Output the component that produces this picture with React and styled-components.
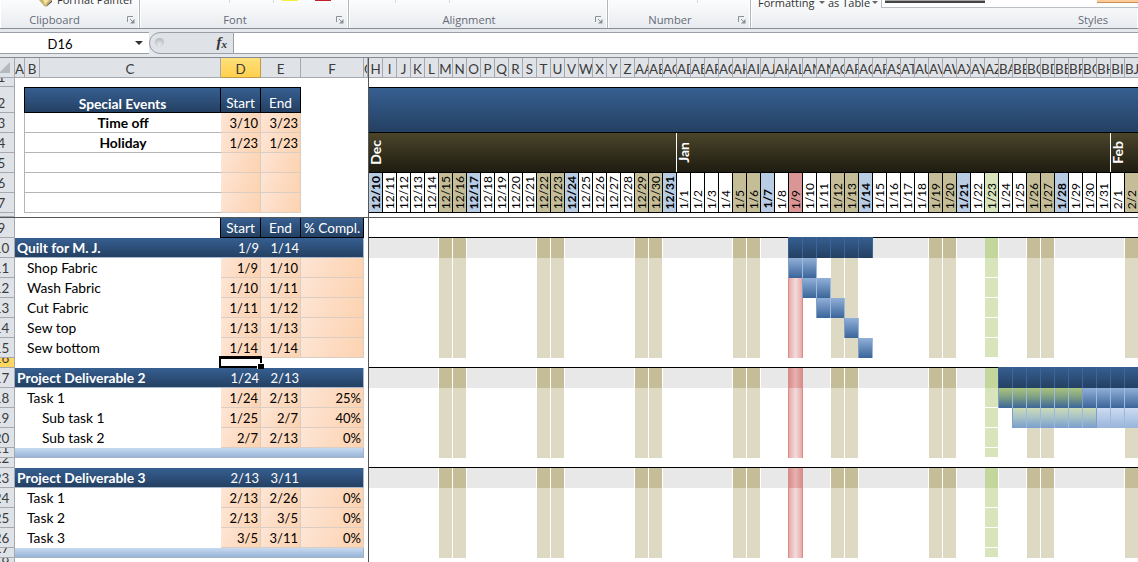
import React from "react";
import styled, { createGlobalStyle } from "styled-components";

const COLUMN_COUNT = 55;
const TODAY = 30;
const HOLIDAY = 44;

const letter = (i) => String.fromCharCode(65 + i);
const columnName = (i) => {
  const n = i + 7;
  return n < 26 ? letter(n) : letter(Math.floor(n / 26) - 1) + letter(n % 26);
};

const days = Array.from({ length: COLUMN_COUNT }, (_, i) => {
  const label =
    i < 22 ? `12/${i + 10}` : i < 53 ? `1/${i - 21}` : `2/${i - 52}`;
  let kind = "plain";
  if (i % 7 === 0) kind = "monday";
  if (i % 7 === 4) kind = "friday";
  if (i % 7 > 4) kind = "weekend";
  if (i === TODAY) kind = "today";
  if (i === HOLIDAY) kind = "holiday";
  return { label, kind, column: columnName(i) };
});

const events = [
  { no: 3, name: "Time off", start: "3/10", end: "3/23" },
  { no: 4, name: "Holiday", start: "1/23", end: "1/23" },
  { no: 5 },
  { no: 6 },
  { no: 7 },
];

const rows = [
  { no: 10, type: "group", name: "Quilt for M. J.", start: "1/9", end: "1/14", bars: [[30, 35, "summary"]] },
  { no: 11, type: "task", name: "Shop Fabric", start: "1/9", end: "1/10", bars: [[30, 31, "task"]] },
  { no: 12, type: "task", name: "Wash Fabric", start: "1/10", end: "1/11", bars: [[31, 32, "task"]] },
  { no: 13, type: "task", name: "Cut Fabric", start: "1/11", end: "1/12", bars: [[32, 33, "task"]] },
  { no: 14, type: "task", name: "Sew top", start: "1/13", end: "1/13", bars: [[34, 34, "task"]] },
  { no: 15, type: "task", name: "Sew bottom", start: "1/14", end: "1/14", bars: [[35, 35, "task"]] },
  { no: 16, type: "gap", active: true },
  { no: 17, type: "group", name: "Project Deliverable 2", start: "1/24", end: "2/13", bars: [[45, 54, "summary"]] },
  { no: 18, type: "task", name: "Task 1", start: "1/24", end: "2/13", done: "25%", bars: [[45, 50, "taskDone"], [51, 54, "task"]] },
  { no: 19, type: "task", sub: true, name: "Sub task 1", start: "1/25", end: "2/7", done: "40%", bars: [[46, 51, "subDone"], [52, 54, "sub"]] },
  { no: 20, type: "task", sub: true, name: "Sub task 2", start: "2/7", end: "2/13", done: "0%" },
  { no: 21, type: "footer" },
  { no: 22, type: "gap" },
  { no: 23, type: "group", name: "Project Deliverable 3", start: "2/13", end: "3/11" },
  { no: 24, type: "task", name: "Task 1", start: "2/13", end: "2/26", done: "0%" },
  { no: 25, type: "task", name: "Task 2", start: "2/13", end: "3/5", done: "0%" },
  { no: 26, type: "task", name: "Task 3", start: "3/5", end: "3/11", done: "0%" },
  { no: 27, type: "footer" },
  { no: 28, type: "gap" },
];

const rowHeight = (type) => (type === "gap" || type === "footer" ? 10 : 20);

const navy = "linear-gradient(#365f91, #244062)";

const barFill = {
  summary: navy,
  task: "linear-gradient(#91b0d8, #3b6599)",
  taskDone: "linear-gradient(#a9c47e, #7f9f84 45%, #3b6599)",
  sub: "linear-gradient(#cddcf2, #98b5da)",
  subDone: "linear-gradient(#cbdcb8, #a9c3c5 45%, #7a9fcd)",
};

const dayFill = {
  plain: "#fff",
  friday: "#fff",
  monday: "#b8cce4",
  weekend: "#c4bd97",
  today: "#d99694",
  holiday: "#d7e4bc",
};

const cellFill = ({ $kind, $group }) => {
  if ($kind === "weekend") return $group ? "#c4bd97" : "#ddd9c3";
  if ($kind === "holiday") return $group ? "#c3d69b" : "#d7e4bc";
  if ($kind === "today")
    return $group
      ? "linear-gradient(90deg, #d98c8a, #e6b2b0 50%, #d98c8a)"
      : "linear-gradient(90deg, #e6aaa9, #f2dcdb 50%, #e6aaa9)";
  return $group ? "#e8e8e8" : "#fff";
};

const GlobalStyle = createGlobalStyle`
  * {
    box-sizing: border-box;
  }
  body {
    margin: 0;
    overflow: hidden;
    background: #fff;
  }
`;

const Screen = styled.div`
  width: 1138px;
  height: 562px;
  overflow: hidden;
  font-family: Lato, sans-serif;
  font-size: 13px;
  line-height: 18px;
  color: #000;
  white-space: nowrap;
`;

const Ribbon = styled.div`
  display: flex;
  height: 29px;
  background: linear-gradient(#fbfcfd, #f2f4f6 50%, #e8ebef);
  border-bottom: 1px solid #8b9097;
  font-family: "Open Sans", sans-serif;
  font-size: 11.2px;
  color: #666a78;
`;

const RibbonGroup = styled.div`
  display: flex;
  flex-direction: column;
  flex: none;
  width: ${(p) => p.$width}px;
  border-right: 1px solid #b2b5ba;
  box-shadow: inset -1px 0 #fff, inset 1px 0 #fff;
`;

const Tools = styled.div`
  display: flex;
  height: 11px;
  padding-left: ${(p) => p.$indent || 0}px;
  overflow: hidden;
  color: #333;
`;

const ToolText = styled.span`
  width: ${(p) => p.$width}px;
  margin-top: ${(p) => p.$top}px;
  margin-left: ${(p) => p.$gap || 0}px;
  font-size: 11px;
  line-height: 16px;
`;

const ToolArrow = styled.i`
  width: 0;
  height: 0;
  margin: 1px 3px 0 2px;
  border: 3px solid transparent;
  border-top: 3px solid #666;
  border-bottom: 0;
`;

const Swatch = styled.i`
  width: 16px;
  height: 1px;
  margin-right: ${(p) => p.$gap || 0}px;
  background: ${(p) => p.$color};
`;

const Tick = styled.i`
  width: 1px;
  height: 3px;
  margin-right: ${(p) => p.$gap}px;
  background: #d5d8dc;
`;

const Gallery = styled.div`
  flex: 1;
  display: flex;
  justify-content: space-between;
  height: 8px;
  padding-left: 3px;
  background: #fff;
  border: solid #b9bec5;
  border-width: 0 0 1px 1px;
`;

const GalleryItem = styled.i`
  width: ${(p) => p.$width}px;
  height: 3px;
  background: ${(p) => p.$color};
  border-bottom: ${(p) => (p.$selected ? "2px solid #444" : "1px solid #c98d5a")};
`;

const GroupLabel = styled.div`
  display: flex;
  align-items: center;
  height: 17px;
  padding: 0 4px 0 ${(p) => p.$indent || 0}px;
  span {
    flex: 1;
    text-align: center;
    padding-right: ${(p) => p.$trim ?? 6}px;
  }
`;

const FormulaBar = styled.div`
  display: flex;
  height: 29px;
  padding: 3px 0;
  background: #e4e7eb;
  border-bottom: 1px solid #858b94;
`;

const NameBox = styled.div`
  display: flex;
  align-items: center;
  width: 149px;
  height: 22px;
  background: #fff;
  border: solid #9a9fa7;
  border-width: 1px 0;
  padding: 0 6px 0 0;
  span {
    width: 120px;
    padding-top: 1px;
    text-align: center;
  }
`;

const NameArrow = styled.i`
  margin-left: auto;
  border: 4px solid transparent;
  border-top-color: #333;
  border-bottom: 0;
`;

const FunctionBox = styled.div`
  display: flex;
  align-items: center;
  justify-content: space-between;
  width: 85px;
  height: 22px;
  padding: 0 6px 0 5px;
  background: #dfe3e8;
  border: 1px solid #9a9fa7;
  border-radius: 11px 0 0 11px;
`;

const Knob = styled.i`
  width: 9px;
  height: 9px;
  margin-top: -2px;
  border-radius: 50%;
  background: radial-gradient(circle at 50% 75%, #e8eaed, #a9adb3);
`;

const Fx = styled.span`
  font: italic bold 15px/18px "Liberation Serif", serif;
  color: #333;
  sub {
    font-size: 11px;
    vertical-align: -1px;
  }
`;

const FormulaInput = styled.div`
  flex: 1;
  height: 22px;
  background: #fff;
  border: solid #9a9fa7;
  border-width: 1px 0;
`;

const SheetRow = styled.div`
  display: flex;
  height: ${(p) => p.$height}px;
`;

const RowNumber = styled.div`
  display: flex;
  flex: none;
  align-items: flex-end;
  justify-content: center;
  width: 26px;
  margin-left: -11px;
  overflow: hidden;
  color: #3b3b3b;
  font-size: 13.4px;
  line-height: 17px;
  background: ${(p) => (p.$active ? "#ffd65f" : "#dfe3e8")};
  border: solid #a5a9af;
  border-width: 0 1px 1px 0;
`;

const ColumnHead = styled.div`
  flex: none;
  display: flex;
  justify-content: ${(p) => (p.$day ? "safe center" : "center")};
  width: ${(p) => p.$width}px;
  height: 20px;
  overflow: hidden;
  padding-top: 2px;
  font-size: 13.4px;
  color: #3b3b3b;
  background: ${(p) => (p.$active ? "linear-gradient(#ffe07b, #ffd04b)" : "#dfe3e8")};
  border: solid ${(p) => (p.$active ? "#c2984b" : "#a5a9af")};
  border-width: 0 1px 1px 0;
`;

const Corner = styled.div`
  flex: none;
  display: flex;
  align-items: center;
  width: 15px;
  background: #dfe3e8;
  border: solid #a5a9af;
  border-width: 0 1px 1px 0;
`;

const Frozen = styled.div`
  display: flex;
  flex: none;
  width: 354px;
  height: 100%;
  border-right: 1px solid #555;
`;

const Timeline = styled.div`
  display: flex;
  flex: none;
  width: 769px;
  height: 100%;
  overflow: hidden;
`;

const Cell = styled.div`
  flex: none;
  display: flex;
  align-items: flex-end;
  justify-content: ${(p) => p.$align || "flex-end"};
  width: ${(p) => p.$width}px;
  height: 100%;
  padding: 0 2px;
  overflow: hidden;
`;

const EventHead = styled(Cell)`
  color: #fff;
  font-size: ${(p) => (p.$bold ? 13.8 : 13.6)}px;
  font-weight: ${(p) => (p.$bold ? "bold" : "normal")};
  line-height: 17px;
  background: ${navy};
  border: solid #000;
  border-width: 1px 1px 1px 0;
`;

const EventEdge = styled(Cell)`
  border-right: 1px solid ${(p) => (p.$dark ? "#000" : "#b5b5b5")};
`;

const EventName = styled(Cell)`
  font-size: 13.8px;
  font-weight: bold;
  border: solid #b5b5b5;
  border-width: 0 0 1px;
`;

const InputCell = styled(Cell)`
  background: linear-gradient(115deg, #fde6d6, #fddbc2 50%, #fcd3b0);
  border: solid #dccdc2;
  border-width: 0 1px 1px 0;
`;

const TableHead = styled(EventHead)`
  padding: 0;
  border-top: 0;
`;

const GroupRow = styled.div`
  display: flex;
  width: 349px;
  height: 20px;
  color: #fff;
  background: ${navy};
  border: solid #a7b8cd;
  border-width: 0 1px 1px 0;
`;

const GroupName = styled(Cell)`
  font-size: 13.8px;
  font-weight: bold;
`;

const TaskName = styled(Cell)`
  padding-left: ${(p) => (p.$sub ? 27 : 12)}px;
  padding-bottom: 1px;
  font-size: 13.8px;
  line-height: 19px;
`;

const Footer = styled.div`
  width: 349px;
  height: 10px;
  background: linear-gradient(#c8daf0, #98b4d8);
  border: solid #a5b3c4;
  border-width: 0 1px 1px 0;
`;

const YearBand = styled.div`
  width: 100%;
  height: 46px;
  background: linear-gradient(#365f91, #244062);
  border: solid #000;
  border-width: 1px 0;
`;

const MonthBand = styled.div`
  display: flex;
  height: 40px;
  background: linear-gradient(#4a452a, #1f1c11);
  border-bottom: 1px solid #000;
`;

const Month = styled.div`
  flex: none;
  display: flex;
  align-items: center;
  width: ${(p) => p.$days * 14}px;
  border-right: 1px solid ${(p) => (p.$last ? "transparent" : "#fff")};
`;

const DayLabel = styled.span`
  writing-mode: vertical-rl;
  transform: rotate(180deg);
  line-height: 13px;
`;

const MonthLabel = styled(DayLabel)`
  color: #fff;
  font-size: 14px;
  font-weight: bold;
  line-height: 14px;
`;

const Day = styled.div`
  flex: none;
  display: flex;
  align-items: flex-end;
  justify-content: center;
  width: 14px;
  height: 40px;
  padding-bottom: 3px;
  overflow: hidden;
  font-size: 12px;
  font-weight: ${(p) => (p.$kind === "monday" ? "bold" : "normal")};
  background: ${(p) => dayFill[p.$kind]};
  border: solid #000;
  border-width: 0 1px 1px 0;
`;

const Chart = styled.div`
  display: flex;
  flex: none;
  height: ${(p) => p.$height}px;
  margin-top: ${(p) => (p.$group ? -1 : 0)}px;
  border-top: ${(p) => (p.$group ? "1px solid #000" : "0")};
`;

const DayCell = styled.div`
  flex: none;
  width: 14px;
  height: 100%;
  background: ${cellFill};
  border-right: ${(p) => (p.$kind === "plain" || p.$kind === "monday" ? 0 : 1)}px solid
    ${(p) => (p.$kind === "today" ? "#d98c8a" : "#fff")};
  border-bottom: ${(p) => (p.$kind === "holiday" && !p.$group ? 1 : 0)}px solid #fff;
  box-shadow: ${(p) => (p.$kind === "today" ? "-1px 0 #d98c8a" : "none")};
`;

const BarCell = styled.div`
  flex: none;
  width: 14px;
  height: ${(p) => (p.$bar === "summary" ? "calc(100% + 1px)" : "100%")};
  margin-top: ${(p) => (p.$bar === "summary" ? -1 : 0)}px;
  background: ${(p) => barFill[p.$bar]};
  border-right: 1px solid ${(p) => (p.$bar === "summary" ? "#3c659a" : "#9db9dd")};
  box-shadow: ${(p) => (p.$first ? (p.$bar === "summary" ? "-1px 0 #365f91" : "-1px 0 #7f9fc9") : "none")};
`;

const ActiveCell = styled.div`
  position: absolute;
  left: 219px;
  top: 356px;
  width: 43px;
  height: 12px;
  border: solid #000;
  border-width: 3px 2px 2px 2px;
  &::after {
    content: "";
    position: absolute;
    right: -4px;
    bottom: -3px;
    width: 6px;
    height: 5px;
    background: #000;
    border: solid #fff;
    border-width: 1px 0 0 1px;
  }
`;

const FreezeRow = styled.div`
  display: flex;
  height: 5px;
  border-bottom: 1px solid #555;
`;

const Launcher = () => (
  <svg width="8" height="8" viewBox="0 0 8 8" fill="none" stroke="#8a8f98">
    <path d="M.5 6V.5H6M3 3l3 3" />
    <path d="M7.5 3v4.5H3z" fill="#8a8f98" stroke="none" />
  </svg>
);

const PainterIcon = () => (
  <svg width="14" height="7" viewBox="0 0 14 7">
    <path d="M0 0h13L6 7z" fill="#c9b36a" />
    <path d="M4 0h6L6 5z" fill="#f3e29a" />
    <path d="M8 5l5-5v2L7 7z" fill="#555" />
  </svg>
);

const ChartRow = ({ row }) => {
  if (row.type === "gap") return null;
  const group = row.type === "group";
  return (
    <Chart $group={group} $height={rowHeight(row.type) + (group ? 1 : 0)}>
      {days.map((day, i) => {
        const bar = (row.bars || []).find(([from, to]) => i >= from && i <= to);
        return bar ? (
          <BarCell key={i} $bar={bar[2]} $first={i === bar[0]} />
        ) : (
          <DayCell key={i} $kind={day.kind} $group={group} />
        );
      })}
    </Chart>
  );
};

const FrozenRow = ({ row }) => {
  if (row.type === "gap") return null;
  if (row.type === "footer") return <Footer />;
  if (row.type === "group")
    return (
      <GroupRow>
        <GroupName $width={206} $align="flex-start">{row.name}</GroupName>
        <Cell $width={40}>{row.start}</Cell>
        <Cell $width={40}>{row.end}</Cell>
      </GroupRow>
    );
  return (
    <>
      <TaskName $width={206} $align="flex-start" $sub={row.sub}>{row.name}</TaskName>
      <InputCell $width={40}>{row.start}</InputCell>
      <InputCell $width={40}>{row.end}</InputCell>
      <InputCell $width={63}>{row.done}</InputCell>
    </>
  );
};

const Header = () => (
  <>
    <Ribbon>
      <RibbonGroup $width={140}>
        <Tools $indent={39}>
          <PainterIcon />
          <ToolText $top={-8} $gap={4}>Format Painter</ToolText>
        </Tools>
        <GroupLabel $trim={18}>
          <span>Clipboard</span>
          <Launcher />
        </GroupLabel>
      </RibbonGroup>
      <RibbonGroup $width={209}>
        <Tools $indent={89}>
          <Tick $gap={43} />
          <Tick $gap={8} />
          <Swatch $color="#f7ef3a" $gap={17} />
          <Swatch $color="#c0202c" />
        </Tools>
        <GroupLabel>
          <span>Font</span>
          <Launcher />
        </GroupLabel>
      </RibbonGroup>
      <RibbonGroup $width={259}>
        <Tools $indent={46}>
          <Tick $gap={53} />
          <Tick $gap={0} />
        </Tools>
        <GroupLabel>
          <span>Alignment</span>
          <Launcher />
        </GroupLabel>
      </RibbonGroup>
      <RibbonGroup $width={143}>
        <Tools $indent={89}>
          <Tick $gap={0} />
        </Tools>
        <GroupLabel>
          <span>Number</span>
          <Launcher />
        </GroupLabel>
      </RibbonGroup>
      <RibbonGroup $width={388}>
        <Tools $indent={7}>
          <ToolText $top={-5} $width={59}>Formatting</ToolText>
          <ToolArrow />
          <ToolText $top={-5} $width={42}>as Table</ToolText>
          <ToolArrow />
          <Gallery>
            <GalleryItem $width={100} $color="#a5a5a5" $selected />
            <GalleryItem $width={41} $color="#ffcc99" />
          </Gallery>
        </Tools>
        <GroupLabel $indent={301} $trim={0}>
          <span>Styles</span>
        </GroupLabel>
      </RibbonGroup>
    </Ribbon>
    <FormulaBar>
      <NameBox>
        <span>D16</span>
        <NameArrow />
      </NameBox>
      <FunctionBox>
        <Knob />
        <Fx>f<sub>x</sub></Fx>
      </FunctionBox>
      <FormulaInput />
    </FormulaBar>
  </>
);

const App = () => (
  <Screen>
    <GlobalStyle />
    <Header />
    <SheetRow $height={20}>
      <Corner>
        <svg width="10" height="11" viewBox="0 0 10 11">
          <path d="M10 0v11H-1z" fill="#b4b9c0" />
        </svg>
      </Corner>
      <Frozen>
        <ColumnHead $width={10}>A</ColumnHead>
        <ColumnHead $width={15}>B</ColumnHead>
        <ColumnHead $width={181}>C</ColumnHead>
        <ColumnHead $width={40} $active>D</ColumnHead>
        <ColumnHead $width={40}>E</ColumnHead>
        <ColumnHead $width={63}>F</ColumnHead>
        <ColumnHead $width={4} $day>G</ColumnHead>
      </Frozen>
      <Timeline>
        {days.map((day) => (
          <ColumnHead key={day.column} $width={14} $day>{day.column}</ColumnHead>
        ))}
      </Timeline>
    </SheetRow>
    <SheetRow $height={9}>
      <RowNumber>1</RowNumber>
      <Frozen />
    </SheetRow>
    {/* the date bands run across the event rows on the left */}
    <SheetRow $height={126}>
      <div>
        <SheetRow $height={26}>
          <RowNumber>2</RowNumber>
          <Frozen>
            <EventEdge $width={10} $dark />
            <EventHead $width={196} $align="center" $bold>Special Events</EventHead>
            <EventHead $width={40} $align="center">Start</EventHead>
            <EventHead $width={40} $align="center">End</EventHead>
          </Frozen>
        </SheetRow>
        {events.map((event) => (
          <SheetRow key={event.no} $height={20}>
            <RowNumber>{event.no}</RowNumber>
            <Frozen>
              <EventEdge $width={10} />
              <EventName $width={196} $align="center">{event.name}</EventName>
              <InputCell $width={40}>{event.start}</InputCell>
              <InputCell $width={40}>{event.end}</InputCell>
            </Frozen>
          </SheetRow>
        ))}
      </div>
      <div>
        <YearBand />
        <MonthBand>
          <Month $days={22}><MonthLabel>Dec</MonthLabel></Month>
          <Month $days={31}><MonthLabel>Jan</MonthLabel></Month>
          <Month $days={2} $last><MonthLabel>Feb</MonthLabel></Month>
        </MonthBand>
        <Timeline>
          {days.map((day) => (
            <Day key={day.label} $kind={day.kind}>
              <DayLabel>{day.label}</DayLabel>
            </Day>
          ))}
        </Timeline>
      </div>
    </SheetRow>
    <FreezeRow>
      <RowNumber />
      <Frozen />
    </FreezeRow>
    <SheetRow $height={20}>
      <RowNumber>9</RowNumber>
      <Frozen>
        <EventEdge $width={206} $dark />
        <TableHead $width={40} $align="center">Start</TableHead>
        <TableHead $width={40} $align="center">End</TableHead>
        <TableHead $width={63} $align="center">% Compl.</TableHead>
      </Frozen>
    </SheetRow>
    {rows.map((row) => (
      <SheetRow key={row.no} $height={rowHeight(row.type)}>
        <RowNumber $active={row.active}>{row.no}</RowNumber>
        <Frozen>
          <FrozenRow row={row} />
        </Frozen>
        <ChartRow row={row} />
      </SheetRow>
    ))}
    <ActiveCell />
  </Screen>
);

export default App;
